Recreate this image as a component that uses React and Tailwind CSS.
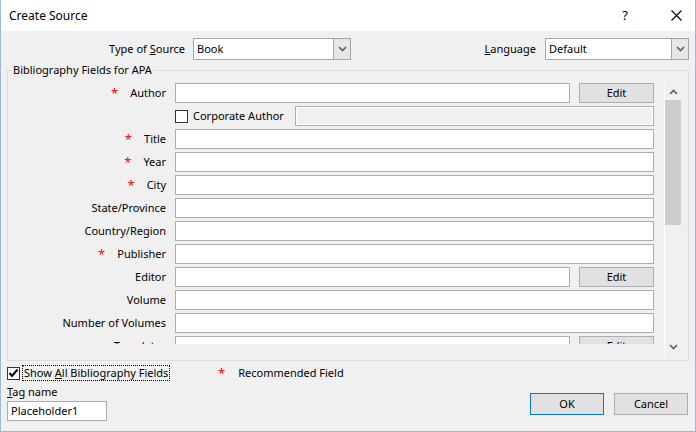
import React from 'react';

const font = { fontFamily: '"Noto Sans", "Open Sans", sans-serif' };

const Chevron = ({ up = false }) => (
  <svg width="9" height="6" viewBox="0 0 9 6" className="block">
    <path
      d={up ? 'M1 5 L4.5 1.5 L8 5' : 'M1 1 L4.5 4.5 L8 1'}
      fill="none"
      stroke="#606060"
      strokeWidth="1.6"
    />
  </svg>
);

const Dropdown = ({ value, width }) => (
  <div className={`flex h-[22px] ${width} border border-[#a6a6a6] bg-white`}>
    <div className="flex-1 pl-[3px] leading-[20px]">{value}</div>
    <div className="flex w-[17px] items-center justify-center border-l border-[#a6a6a6] bg-[#e6e6e6]">
      <Chevron />
    </div>
  </div>
);

const Field = ({ width, disabled = false }) => (
  <div
    className={`h-[20px] border border-[#adadad] ${disabled ? 'bg-[#f0f0f0] shadow-[inset_0_0_0_1px_#ffffff]' : 'bg-white'} ${width}`}
  />
);

const Button = ({ children, className = '' }) => (
  <div className={`flex items-center justify-center border bg-[#e1e1e1] ${className}`}>
    {children}
  </div>
);

const Label = ({ text, star }) => (
  <div className="flex w-[158px] items-center justify-end">
    {star && <span className="mr-[12px] text-[13px] leading-none text-[#ff0000]">*</span>}
    <span>{text}</span>
  </div>
);

const rows = [
  { label: 'Author', star: true, edit: true },
  { corporate: true },
  { label: 'Title', star: true },
  { label: 'Year', star: true },
  { label: 'City', star: true },
  { label: 'State/Province' },
  { label: 'Country/Region' },
  { label: 'Publisher', star: true },
  { label: 'Editor', edit: true },
  { label: 'Volume' },
  { label: 'Number of Volumes' },
  { label: 'Translator', edit: true },
];

export default function App() {
  return (
    <div
      style={font}
      className="flex h-[432px] w-[696px] flex-col border border-t-0 border-[#9db8d8] bg-[#f0f0f0] text-[11px] text-black"
    >
      {/* Title bar */}
      <div className="flex h-[31px] shrink-0 items-center bg-white pl-[8px]">
        <span className="flex-1 text-[12px]">Create Source</span>
        <span className="mr-[43px] text-[13px]">?</span>
        <svg width="11" height="11" viewBox="0 0 11 11" className="mr-[13px]">
          <path d="M0.5 0.5 L10.5 10.5 M10.5 0.5 L0.5 10.5" stroke="#000" strokeWidth="1.1" />
        </svg>
      </div>

      {/* Source / language */}
      <div className="mt-[7px] flex h-[22px] items-center">
        <div className="w-[184px] text-right">
          Type of <span className="underline">S</span>ource
        </div>
        <div className="ml-[8px]">
          <Dropdown value="Book" width="w-[158px]" />
        </div>
        <div className="flex-1 pr-[9px] text-right">
          <span className="underline">L</span>anguage
        </div>
        <div className="mr-[6px]">
          <Dropdown value="Default" width="w-[144px]" />
        </div>
      </div>

      {/* Group box */}
      <fieldset className="mx-[6px] mt-[2px] h-[299px] min-w-0 border border-[#dcdcdc]">
        <legend className="ml-[4px] px-[1px] leading-[16px]">Bibliography Fields for APA</legend>
        <div className="flex pt-[5px]">
          <div className="h-[261px] min-w-0 flex-1 overflow-hidden">
            <div className="flex flex-col gap-[3px]">
              {rows.map((r, i) =>
                r.corporate ? (
                  <div key={i} className="flex h-[20px] items-center">
                    <div className="w-[158px]" />
                    <div className="ml-[9px] flex items-center">
                      <div className="h-[13px] w-[13px] border border-[#333] bg-white" />
                      <span className="ml-[5px] w-[102px]">Corporate Author</span>
                      <Field disabled width="w-[359px]" />
                    </div>
                  </div>
                ) : (
                  <div key={i} className="flex h-[20px] items-center">
                    <Label text={r.label} star={r.star} />
                    <div className="ml-[9px] flex">
                      <Field width={r.edit ? 'w-[395px]' : 'w-[479px]'} />
                      {r.edit && (
                        <Button className="ml-[9px] h-[20px] w-[75px] border-[#adadad]">Edit</Button>
                      )}
                    </div>
                  </div>
                )
              )}
            </div>
          </div>
          {/* Scrollbar */}
          <div className="ml-[8px] mr-[7px] flex h-[272px] w-[17px] shrink-0 flex-col border-l border-white">
            <div className="flex h-[17px] items-center justify-center">
              <Chevron up />
            </div>
            <div className="h-[125px] bg-[#cdcdcd]" />
            <div className="flex-1" />
            <div className="flex h-[17px] items-center justify-center">
              <Chevron />
            </div>
          </div>
        </div>
      </fieldset>

      {/* Bottom */}
      <div className="mt-[4px] flex h-[16px] items-center pl-[6px]">
        <div className="flex w-[211px] items-center">
          <div className="flex h-[13px] w-[13px] items-center justify-center border border-[#333] bg-white">
            <svg width="11" height="10" viewBox="0 0 11 10">
              <path d="M1.5 5 L4 8 L9.5 1.5" fill="none" stroke="#000" strokeWidth="2" />
            </svg>
          </div>
          <span className="ml-[2px] border border-dotted border-black px-[1px] leading-[14px]">
            Show <span className="underline">A</span>ll Bibliography Fields
          </span>
        </div>
        <span className="text-[13px] leading-none text-[#ff0000]">*</span>
        <span className="ml-[13px]">Recommended Field</span>
      </div>

      <div className="flex flex-1 pl-[6px] pr-[7px]">
        <div className="flex flex-col">
          <div className="mt-[3px] leading-[16px]">
            <span className="underline">T</span>ag name
          </div>
          <div className="mt-[1px] h-[20px] w-[100px] border border-[#adadad] bg-white pl-[3px] leading-[18px]">
            Placeholder1
          </div>
        </div>
        <div className="flex-1" />
        <div className="mt-[12px] flex gap-[10px]">
          <Button className="h-[22px] w-[74px] border-[#0078d7]">OK</Button>
          <Button className="h-[22px] w-[74px] border-[#adadad]">Cancel</Button>
        </div>
      </div>
    </div>
  );
}
